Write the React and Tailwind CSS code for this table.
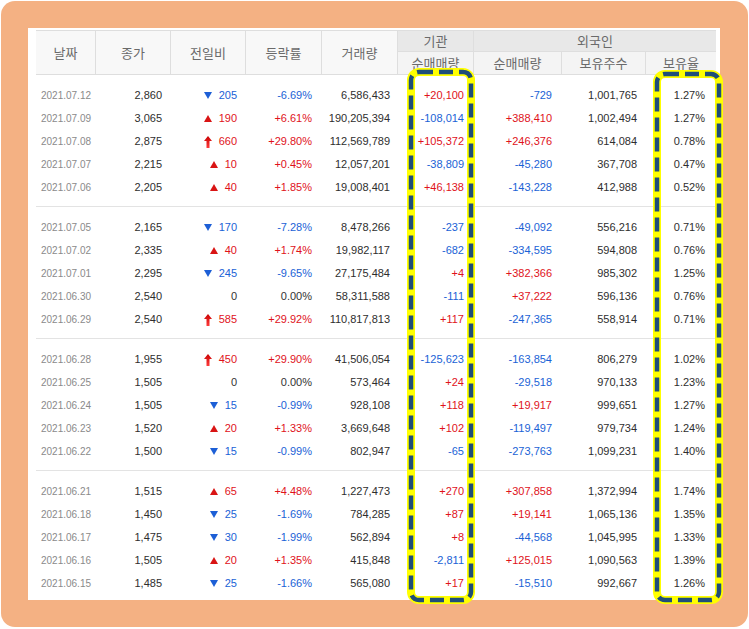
import React from 'react';

const COLS = 'grid grid-cols-[60px_75px_75px_76px_76px_76px_88px_84px_70px]';

// [date, close, dir, diff, rate, volume, inst, foreignNet, foreignHold, foreignRate]
// dir: d = down, u = up, l = upper limit, n = none
const groups = [
  [
    ['2021.07.12', '2,860', 'd', '205', '-6.69%', '6,586,433', '+20,100', '-729', '1,001,765', '1.27%'],
    ['2021.07.09', '3,065', 'u', '190', '+6.61%', '190,205,394', '-108,014', '+388,410', '1,002,494', '1.27%'],
    ['2021.07.08', '2,875', 'l', '660', '+29.80%', '112,569,789', '+105,372', '+246,376', '614,084', '0.78%'],
    ['2021.07.07', '2,215', 'u', '10', '+0.45%', '12,057,201', '-38,809', '-45,280', '367,708', '0.47%'],
    ['2021.07.06', '2,205', 'u', '40', '+1.85%', '19,008,401', '+46,138', '-143,228', '412,988', '0.52%'],
  ],
  [
    ['2021.07.05', '2,165', 'd', '170', '-7.28%', '8,478,266', '-237', '-49,092', '556,216', '0.71%'],
    ['2021.07.02', '2,335', 'u', '40', '+1.74%', '19,982,117', '-682', '-334,595', '594,808', '0.76%'],
    ['2021.07.01', '2,295', 'd', '245', '-9.65%', '27,175,484', '+4', '+382,366', '985,302', '1.25%'],
    ['2021.06.30', '2,540', 'n', '0', '0.00%', '58,311,588', '-111', '+37,222', '596,136', '0.76%'],
    ['2021.06.29', '2,540', 'l', '585', '+29.92%', '110,817,813', '+117', '-247,365', '558,914', '0.71%'],
  ],
  [
    ['2021.06.28', '1,955', 'l', '450', '+29.90%', '41,506,054', '-125,623', '-163,854', '806,279', '1.02%'],
    ['2021.06.25', '1,505', 'n', '0', '0.00%', '573,464', '+24', '-29,518', '970,133', '1.23%'],
    ['2021.06.24', '1,505', 'd', '15', '-0.99%', '928,108', '+118', '+19,917', '999,651', '1.27%'],
    ['2021.06.23', '1,520', 'u', '20', '+1.33%', '3,669,648', '+102', '-119,497', '979,734', '1.24%'],
    ['2021.06.22', '1,500', 'd', '15', '-0.99%', '802,947', '-65', '-273,763', '1,099,231', '1.40%'],
  ],
  [
    ['2021.06.21', '1,515', 'u', '65', '+4.48%', '1,227,473', '+270', '+307,858', '1,372,994', '1.74%'],
    ['2021.06.18', '1,450', 'd', '25', '-1.69%', '784,285', '+87', '+19,141', '1,065,136', '1.35%'],
    ['2021.06.17', '1,475', 'd', '30', '-1.99%', '562,894', '+8', '-44,568', '1,045,995', '1.33%'],
    ['2021.06.16', '1,505', 'u', '20', '+1.35%', '415,848', '-2,811', '+125,015', '1,090,563', '1.39%'],
    ['2021.06.15', '1,485', 'd', '25', '-1.66%', '565,080', '+17', '-15,510', '992,667', '1.26%'],
  ],
];

const signColor = v =>
  v.startsWith('+') ? 'text-[#e0121b]' : v.startsWith('-') ? 'text-[#1a62d6]' : 'text-[#333]';

function Arrow({ dir }) {
  if (dir === 'd')
    return (
      <svg width="8" height="7" viewBox="0 0 8 7">
        <path d="M0 0H8L4 7Z" fill="#1d5fd6" />
      </svg>
    );
  if (dir === 'u')
    return (
      <svg width="8" height="7" viewBox="0 0 8 7">
        <path d="M4 0L8 7H0Z" fill="#d91414" />
      </svg>
    );
  if (dir === 'l')
    return (
      <svg width="8" height="12" viewBox="0 0 8 12">
        <defs>
          <linearGradient id="lim" x1="0" y1="0" x2="0" y2="1">
            <stop offset="0" stopColor="#c80000" />
            <stop offset="1" stopColor="#ff3b3b" />
          </linearGradient>
        </defs>
        <path d="M4 0L8 5H5.5V12H2.5V5H0Z" fill="url(#lim)" />
      </svg>
    );
  return null;
}

function Row({ r }) {
  const [date, close, dir, diff, rate, vol, inst, fNet, fHold, fRate] = r;
  const diffColor = dir === 'd' ? 'text-[#1a62d6]' : dir === 'n' ? 'text-[#333]' : 'text-[#e0121b]';
  return (
    <div className={`${COLS} h-[23px] items-center text-[11px] text-[#2e2e2e]`}>
      <div className="text-center text-[10px] text-[#8a8a8a]">{date}</div>
      <div className="text-right pr-[9px]">{close}</div>
      <div className={`flex items-center justify-end gap-[7px] pr-[9px] ${diffColor}`}>
        <Arrow dir={dir} />
        <span>{diff}</span>
      </div>
      <div className={`text-right pr-[10px] ${signColor(rate)}`}>{rate}</div>
      <div className="text-right pr-[8px]">{vol}</div>
      <div className={`text-right pr-[10px] ${signColor(inst)}`}>{inst}</div>
      <div className={`text-right pr-[10px] ${signColor(fNet)}`}>{fNet}</div>
      <div className="text-right pr-[9px]">{fHold}</div>
      <div className="text-right pr-[11px]">{fRate}</div>
    </div>
  );
}

function Highlight({ className, w, h }) {
  return (
    <svg className={`absolute pointer-events-none ${className}`} width={w} height={h}>
      <rect x="4" y="4" width={w - 8} height={h - 8} rx="8" fill="none" stroke="#ffff00" strokeWidth="8" />
      <rect
        x="4"
        y="4"
        width={w - 8}
        height={h - 8}
        rx="8"
        fill="none"
        stroke="#1f4e79"
        strokeWidth="4.5"
        strokeDasharray="14 6"
      />
    </svg>
  );
}

export default function App() {
  const hd = 'flex items-center justify-center border-[#dedede]';
  return (
    <div className="w-[749px] h-[629px] bg-white p-px font-['Liberation_Sans','Noto_Sans_CJK_KR',sans-serif]">
      <div className="w-[747px] h-[626px] rounded-[14px] bg-[#f4b183] pt-[27px] pl-[27px]">
        <div className="relative w-[692px] h-[572px] bg-white pt-[2px] pl-[8px]">
          <div className={`${COLS} grid-rows-[21px_22px] w-[680px] border-t border-b border-[#dedede] text-[13px] text-[#6a6a6a] font-['Noto_Sans_CJK_KR',sans-serif]`}>
            <div className={`${hd} row-span-2 bg-[#f8f8f8] border-r`}>날짜</div>
            <div className={`${hd} row-span-2 bg-[#f8f8f8] border-r`}>종가</div>
            <div className={`${hd} row-span-2 bg-[#f8f8f8] border-r`}>전일비</div>
            <div className={`${hd} row-span-2 bg-[#f8f8f8] border-r`}>등락률</div>
            <div className={`${hd} row-span-2 bg-[#f8f8f8] border-r`}>거래량</div>
            <div className={`${hd} bg-[#e8e8e8] border-r border-b`}>기관</div>
            <div className={`${hd} col-span-3 bg-[#e8e8e8] border-b`}>외국인</div>
            <div className={`${hd} col-start-6 bg-[#f4f4f4] border-r`}>순매매량</div>
            <div className={`${hd} bg-[#f4f4f4] border-r`}>순매매량</div>
            <div className={`${hd} bg-[#f4f4f4] border-r`}>보유주수</div>
            <div className={`${hd} bg-[#f4f4f4]`}>보유율</div>
          </div>
          <div className="w-[680px]">
            {groups.map((g, i) => (
              <div
                key={i}
                className={i < groups.length - 1 ? 'pt-[9px] pb-[7px] border-b border-[#e3e3e3]' : 'pt-[9px]'}
              >
                {g.map(r => (
                  <Row key={r[0]} r={r} />
                ))}
              </div>
            ))}
          </div>
          <Highlight className="left-[379px] top-[40px]" w={68} h={536} />
          <Highlight className="left-[625px] top-[42px]" w={70} h={534} />
        </div>
      </div>
    </div>
  );
}
